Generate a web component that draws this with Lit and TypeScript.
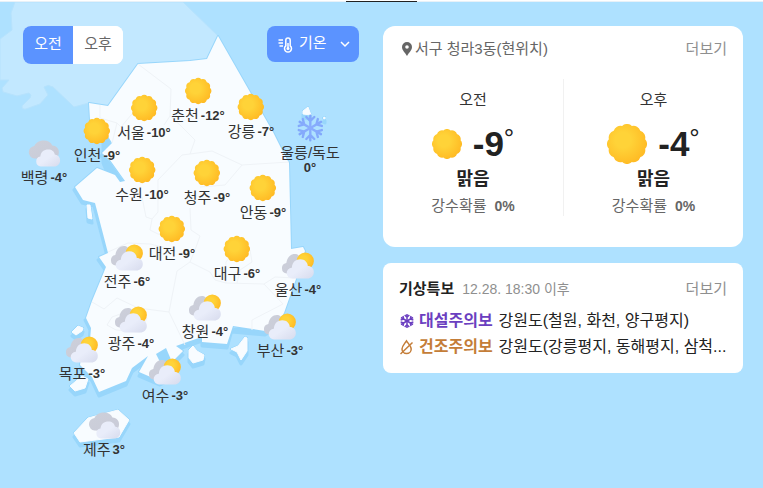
import { LitElement, html, svg, css } from "lit";
import { customElement, state } from "lit/decorators.js";
import { classMap } from "lit/directives/class-map.js";
import { styleMap } from "lit/directives/style-map.js";

type Sky = "sun" | "partly" | "cloud" | "snow";

interface City {
  name: string;
  temp: string;
  sky: Sky;
  x: number;
  y: number;
  stacked?: boolean;
}

const MAP_TOP = 2;
const MAP_WIDTH = 363;
const MAP_HEIGHT = 486;

const CITIES: City[] = [
  { name: "춘천", temp: "-12°", sky: "sun", x: 198, y: 91 },
  { name: "서울", temp: "-10°", sky: "sun", x: 144, y: 108 },
  { name: "강릉", temp: "-7°", sky: "sun", x: 251, y: 107 },
  { name: "인천", temp: "-9°", sky: "sun", x: 97, y: 131 },
  { name: "백령", temp: "-4°", sky: "cloud", x: 44, y: 153 },
  { name: "울릉/독도", temp: "0°", sky: "snow", x: 310, y: 128, stacked: true },
  { name: "수원", temp: "-10°", sky: "sun", x: 142, y: 170 },
  { name: "청주", temp: "-9°", sky: "sun", x: 207, y: 173 },
  { name: "안동", temp: "-9°", sky: "sun", x: 263, y: 188 },
  { name: "대전", temp: "-9°", sky: "sun", x: 172, y: 229 },
  { name: "대구", temp: "-6°", sky: "sun", x: 237, y: 249 },
  { name: "전주", temp: "-6°", sky: "partly", x: 127, y: 257 },
  { name: "울산", temp: "-4°", sky: "partly", x: 298, y: 265 },
  { name: "창원", temp: "-4°", sky: "partly", x: 205, y: 307 },
  { name: "부산", temp: "-3°", sky: "partly", x: 280, y: 326 },
  { name: "광주", temp: "-4°", sky: "partly", x: 131, y: 319 },
  { name: "목포", temp: "-3°", sky: "partly", x: 82, y: 349 },
  { name: "여수", temp: "-3°", sky: "partly", x: 165, y: 371 },
  { name: "제주", temp: "3°", sky: "cloud", x: 104, y: 425 },
];

const NORTH =
  "M15 2L11 13L12 30L0 39V80H9L2 88L3 92L17 96L29 93Q32 95 30 98L22 106Q22 110 26 109L40 104L48 95L44 87Q48 84 53 87L74 107L89 103L108 106L138 64L190 61L207 59L218 36L183 2Z";

const MAINLAND =
  "M218 36L250 92L273 132L283 152L289 163L291 249L303 247L305 251L300 266L296 279L284 313L276 325L265 331L233 326L227 344L202 342V337L190 341L176 346L183 351L172 362L174 374L160 381L139 372L148 356L132 368L126 381L99 392L92 377L80 365L82 350L90 340L91 328L86 318L92 301L106 267L99 257L108 253L95 203L83 200L75 187L97 168L115 175L120 182L125 181L110 160L102 153L107 148L112 143L104 130L90 120L89 103L108 106L138 64L190 61L207 59Z";

const INLET = "M156 354L166 348L172 362L161 364Z";

const ISLANDS =
  "M87 205H90L92 219L88 218ZM72 332L78 326L83 328L82 331L76 335ZM70 386L82 376L88 379L85 388L75 391ZM74 433L88 418L118 410L129 420L119 437L80 442ZM189 350L193 346L197 351L204 355L203 360L193 363L189 358ZM231 349L238 346L245 337L247 338V351L241 360L237 352ZM303 111L308 107L311 115L303 114ZM323 118L325 117L325 119Z";

const BORDERS =
  "M138 64L171 89L170 116L164 125M100 105V118L117 123L121 127L131 115L138 109M117 123L112 143M190 154L212 151L242 165L289 162M242 165L225 185L200 187M190 154L182 155L158 180V212L152 219L150 230L158 234L172 236M142 197L146 217L152 219M108 252L128 243L150 244L175 250M92 302L104 309L117 298L138 308L169 312L177 271L190 262L210 272L215 280L226 283L264 284L275 277L296 278M264 284L283 304L252 320V330M226 283V262L235 250H250L252 262L240 270L237 283M190 208L191 230L200 236L195 250L190 262M107 325L112 317L126 312L147 318L140 332L116 330ZM169 312L185 345M190 154L195 140L180 125L170 116";

/** Outline of a disc with twelve rounded bumps, one of them at the top. */
function sunPath(radius: number): string {
  const point = (i: number) => {
    const angle = ((i * 30 - 15) * Math.PI) / 180;
    return `${(radius * Math.sin(angle)).toFixed(2)} ${(-radius * Math.cos(angle)).toFixed(2)}`;
  };
  let d = `M${point(0)}`;
  for (let i = 1; i <= 12; i++) d += `A4.6 4.6 0 0 1 ${point(i)}`;
  return d + "Z";
}

const SUN = sunPath(12.2);

const flake = (branch: string) =>
  [0, 60, 120, 180, 240, 300].map((a) => svg`<path d=${branch} transform="rotate(${a})"></path>`);

const GLYPHS = {
  sun: svg`<path d=${SUN} fill="url(#sunFill)"></path>`,
  partly: svg`
    <path fill="url(#greyFill)" d="M-11 8.500A5.300 5.300 0 0 1-11.500-2C-10.500-8-7-11-3-11C0-11 2-9.500 2-6L-4 8Z"></path>
    <circle cx="7.5" cy="-4" r="8.6" fill="url(#sunFill)"></circle>
    <path fill="url(#cloudFill)" d="M-5.500 13.500A5.400 5.400 0 0 1-6 2.700C-5.500-3-2-5.800 2.500-5.800C7-5.800 9.500-3 10 1C13.500 1 16 3.500 16 7C16 11 13 13.500 9.500 13.500Z"></path>`,
  cloud: svg`
    <path fill="url(#greyFill)" d="M-9.500 5.500A6.300 6.300 0 0 1-9.500-7C-7.500-11-4-12.500 0-12.500C4-12.500 7-11 8.500-7.500C13-7 15.500-4 15 0C14.500 4 12 6 8 6Z"></path>
    <path fill="url(#cloudFill)" d="M-3 13.500A5 5 0 0 1-3.500 3.600C-3-1 0-3.500 4.500-3.500C8-3.500 10.500-1.500 11 1.500C14.500 2 16.300 4.500 16.300 7.500C16.300 11 13.500 13.500 10.500 13.500Z"></path>`,
  snow: svg`<g fill="none" stroke="url(#snowFill)" stroke-width="2.4" stroke-linecap="round">
    ${flake("M0 0L.01-12.300M-4-11L0-7L4-11")}</g>`,
};

@customElement("app-root")
export class AppRoot extends LitElement {
  @state() private period = "오전";

  static styles = css`
    :host {
      display: block;
      min-height: 100vh;
      background: #aee1ff;
      color: #333;
      font-family: "Liberation Sans", "Noto Sans CJK KR", sans-serif;
      font-size: 15px;
      line-height: 20px;
    }
    * { box-sizing: border-box; }
    a { color: inherit; text-decoration: none; }
    h2, p, ul { margin: 0; padding: 0; list-style: none; }
    .defs { position: absolute; width: 0; height: 0; }
    .edge { height: 2px; background: #fff; border-bottom: 1px solid #e8f1f8; }
    .edge-mark { width: 71px; height: 2px; margin: 0 auto; border-bottom: 1px solid #222; }
    .page {
      display: grid;
      grid-template-columns: 363fr 360fr;
      gap: 20px;
      padding-right: 20px;
      align-items: start;
    }
    .map { position: relative; aspect-ratio: 363 / 486; }
    .terrain { display: block; width: 100%; height: 100%; }
    .tools {
      position: absolute;
      top: 24px;
      left: 23px;
      right: 4px;
      display: flex;
      justify-content: space-between;
      align-items: flex-start;
    }
    .toggle {
      display: flex;
      overflow: hidden;
      border-radius: 8px;
      background: #fff;
    }
    .tab {
      width: 50px;
      height: 38px;
      padding: 0 0 2px;
      border: 0;
      background: #fff;
      color: #666;
      font: inherit;
    }
    .tab.on { background: #5b93ff; color: #fff; }
    .metric {
      position: relative;
      display: flex;
      align-items: center;
      color: #fff;
    }
    .metric-select {
      appearance: none;
      width: 92px;
      height: 36px;
      padding: 0 30px 2px 32px;
      border: 0;
      border-radius: 8px;
      background: #5b93ff;
      color: inherit;
      font: inherit;
    }
    .metric-icon, .metric-arrow { position: absolute; pointer-events: none; }
    .metric-icon { left: 11px; top: 11px; width: 16px; height: 16px; }
    .metric-arrow { right: 8px; width: 12px; height: 12px; }
    .pin {
      position: absolute;
      display: flex;
      flex-direction: column;
      align-items: center;
      width: max-content;
      transform: translate(-50%, -17px);
    }
    .pin-icon { display: block; width: 34px; height: 34px; }
    .pin-label {
      display: flex;
      align-items: center;
      gap: 2px;
      line-height: 16px;
      color: #333;
    }
    .pin-label.stacked { flex-direction: column; gap: 0; }
    .pin-temp { font-size: 13px; line-height: 14px; }
    .side { display: grid; gap: 16px; padding-top: 24px; }
    .card { background: #fff; border-radius: 12px; min-width: 0; }
    .head {
      display: flex;
      justify-content: space-between;
      align-items: center;
      line-height: 24px;
    }
    .more { color: #8f8f8f; }
    .now { padding: 11px 0 31px; }
    .now .head { padding: 0 16px 0 19px; }
    .place { display: flex; align-items: center; gap: 3px; color: #666; }
    .place-icon { width: 10px; height: 14px; }
    .halves { display: grid; grid-template-columns: 1fr 1fr; margin-top: 18px; }
    .half {
      display: flex;
      flex-direction: column;
      align-items: center;
      padding-top: 11px;
    }
    .half + .half { border-left: 1px solid #f1f1f1; }
    .reading {
      display: flex;
      align-items: center;
      gap: 11px;
      height: 40px;
      margin-top: 14px;
    }
    .sun-small { width: 30px; height: 30px; }
    .sun-large { width: 40px; height: 40px; }
    .degrees {
      display: flex;
      align-items: flex-start;
      color: #222;
      font-size: 35px;
      font-weight: bold;
      line-height: 40px;
    }
    .ring { font-size: 26px; font-weight: normal; line-height: 28px; }
    .state { margin-top: 5px; color: #222; font-size: 18px; font-weight: bold; line-height: 20px; }
    .rain { display: flex; gap: 8px; margin-top: 7px; color: #666; }
    .rain-value { font-size: 14px; }
    .alerts { padding: 14px 16px 13px; border-radius: 8px; }
    .alerts-title { display: flex; align-items: center; gap: 8px; font-size: 15px; color: #222; }
    .time { color: #8f8f8f; font-size: 14px; font-weight: normal; }
    .alert-list { margin-top: 7px; }
    .alert {
      display: flex;
      align-items: center;
      font-size: 16px;
      line-height: 26px;
      color: #222;
    }
    .alert-icon { flex: none; width: 16px; height: 16px; margin-right: 4px; }
    .alert-kind { flex: none; margin-right: 6px; font-weight: bold; }
    .alert-area { white-space: nowrap; }
    .heavy-snow { color: #6b3fc0; }
    .dry { color: #c47d38; }
  `;

  private glyph(sky: Sky, className: string, box = 17) {
    return html`<svg class=${className} viewBox="${-box} ${-box} ${box * 2} ${box * 2}" aria-hidden="true">
      ${GLYPHS[sky]}
    </svg>`;
  }

  private pin(city: City) {
    const place = {
      left: `${(city.x / MAP_WIDTH) * 100}%`,
      top: `${((city.y - MAP_TOP) / MAP_HEIGHT) * 100}%`,
    };
    return html`<div class="pin" style=${styleMap(place)}>
      ${this.glyph(city.sky, "pin-icon")}
      <span class=${classMap({ "pin-label": true, stacked: !!city.stacked })}>
        <span>${city.name}</span><strong class="pin-temp">${city.temp}</strong>
      </span>
    </div>`;
  }

  private half(title: string, degrees: string, size: string) {
    return html`<div class="half">
      <span>${title}</span>
      <div class="reading">
        ${this.glyph("sun", size, 13)}
        <span class="degrees">${degrees}<span class="ring">°</span></span>
      </div>
      <p class="state">맑음</p>
      <p class="rain">강수확률 <strong class="rain-value">0%</strong></p>
    </div>`;
  }

  render() {
    return html`
      <svg class="defs" aria-hidden="true">
        <defs>
          <radialGradient id="sunFill" cx="0.4" cy="0.4" r="0.65">
            <stop offset="0.3" stop-color="#ffd338"></stop>
            <stop offset="1" stop-color="#ffb923"></stop>
          </radialGradient>
          <linearGradient id="greyFill" x1="0" y1="0" x2="1" y2="1">
            <stop offset="0" stop-color="#cdd0da"></stop>
            <stop offset="1" stop-color="#c9cbd8"></stop>
          </linearGradient>
          <linearGradient id="cloudFill" x1="0" y1="0" x2="1" y2="1">
            <stop offset="0.5" stop-color="#e9edfa"></stop>
            <stop offset="1" stop-color="#d7dbed"></stop>
          </linearGradient>
          <linearGradient id="snowFill" gradientUnits="userSpaceOnUse" x1="0" y1="-13" x2="0" y2="13">
            <stop offset="0" stop-color="#82a8fb"></stop>
            <stop offset="1" stop-color="#92b4ff"></stop>
          </linearGradient>
        </defs>
      </svg>
      <div class="edge"><div class="edge-mark"></div></div>
      <main class="page">
        <section class="map" aria-label="전국 날씨">
          <svg class="terrain" viewBox="0 2 363 486" aria-hidden="true">
            <path d=${NORTH} fill="#c2e8ff" stroke="#b6e2fd" stroke-width="1"></path>
            <g fill="#98d6fb" stroke="#98d6fb" stroke-width="3" stroke-linejoin="round">
              <path d=${ISLANDS} transform="translate(0 4)"></path>
              <path d=${INLET} transform="translate(0 4)"></path>
              <path d="M232 326L227 344L202 342V337L176 346L183 351L172 362L174 374L160 381L139 372L148 356L132 368L126 381L99 392L92 377L80 365L100 340L200 325L265 331L276 325L264 320Z" transform="translate(0 4)"></path>
              <path d="M108 253L95 203L83 200L75 187L97 168L115 175L120 182L125 181L110 160L102 153L112 143L104 130V160L120 200Z" transform="translate(-1 3)"></path>
              <path d="M106 267L99 257L108 253L116 262Z" transform="translate(-1 3)"></path>
              <path d="M90 340L91 328L86 318L96 318L100 335Z" transform="translate(-1 2)"></path>
              <path d=${MAINLAND} stroke-width="2"></path>
              <path d=${ISLANDS} stroke-width="2"></path>
            </g>
            <g fill="#f8fcff">
              <path d=${MAINLAND}></path>
              <path d=${ISLANDS} stroke="#f8fcff" stroke-width="1" stroke-linejoin="round"></path>
            </g>
            <path d=${INLET} fill="#98d6fb"></path>
            <path d=${BORDERS} fill="none" stroke="#eff3f7" stroke-width="1"></path>
          </svg>
          ${CITIES.map((city) => this.pin(city))}
          <div class="tools">
            <div class="toggle">
              ${["오전", "오후"].map(
                (name) => html`<button
                  class=${classMap({ tab: true, on: this.period === name })}
                  aria-pressed=${this.period === name}
                  @click=${() => (this.period = name)}
                >${name}</button>`
              )}
            </div>
            <div class="metric">
              <select class="metric-select" aria-label="지도 정보">
                <option>기온</option>
              </select>
              <svg class="metric-icon" viewBox="0 0 16 16" fill="none" stroke="currentColor" stroke-width="1.500" aria-hidden="true">
                <path d="M0.500 3H5M0.500 6H5M1.500 9H5" stroke-width="1.600"></path>
                <path d="M7.800 8.800V3.300A2.200 2.200 0 0 1 12.200 3.300V8.800A3.500 3.500 0 1 1 7.800 8.800Z"></path>
                <path d="M10 6V11.500"></path><circle cx="10" cy="11.500" r="0.800"></circle>
              </svg>
              <svg class="metric-arrow" viewBox="0 0 12 12" fill="none" stroke="currentColor" stroke-width="1.500" aria-hidden="true">
                <path d="M2 4L6 8L10 4"></path>
              </svg>
            </div>
          </div>
        </section>
        <div class="side">
          <section class="card now">
            <div class="head">
              <span class="place">
                <svg class="place-icon" viewBox="0 0 10 14" aria-hidden="true">
                  <path fill="#666" fill-rule="evenodd" d="M5 0A5 5 0 0 1 10 5C10 8.500 6.500 11 5 14C3.500 11 0 8.500 0 5A5 5 0 0 1 5 0ZM5 3.200A1.800 1.800 0 1 0 5 6.800A1.800 1.800 0 1 0 5 3.200Z"></path>
                </svg>
                서구 청라3동(현위치)
              </span>
              <a class="more" href="#now">더보기</a>
            </div>
            <div class="halves">
              ${this.half("오전", "-9", "sun-small")} ${this.half("오후", "-4", "sun-large")}
            </div>
          </section>
          <section class="card alerts">
            <div class="head">
              <h2 class="alerts-title">기상특보 <span class="time">12.28. 18:30 이후</span></h2>
              <a class="more" href="#alerts">더보기</a>
            </div>
            <ul class="alert-list">
              <li class="alert">
                <svg class="alert-icon heavy-snow" viewBox="-8 -8 16 16" fill="none" stroke="currentColor" stroke-width="1.500" aria-hidden="true">
                  ${flake("M0 0L.01-7M-2.300-6L0-3.800L2.300-6")}
                </svg>
                <span class="alert-kind heavy-snow">대설주의보</span>
                <span class="alert-area">강원도(철원, 화천, 양구평지)</span>
              </li>
              <li class="alert">
                <svg class="alert-icon dry" viewBox="0 0 16 16" fill="none" stroke="currentColor" stroke-width="1.500" aria-hidden="true">
                  <path d="M7.500 1.800C5.500 5 3 7.200 3 10A4.600 4.600 0 0 0 12.200 10C12.200 7.200 9.500 5 7.500 1.800Z"></path>
                  <path d="M1.500 15L13.500 3.500"></path>
                </svg>
                <span class="alert-kind dry">건조주의보</span>
                <span class="alert-area">강원도(강릉평지, 동해평지, 삼척...</span>
              </li>
            </ul>
          </section>
        </div>
      </main>
    `;
  }
}
